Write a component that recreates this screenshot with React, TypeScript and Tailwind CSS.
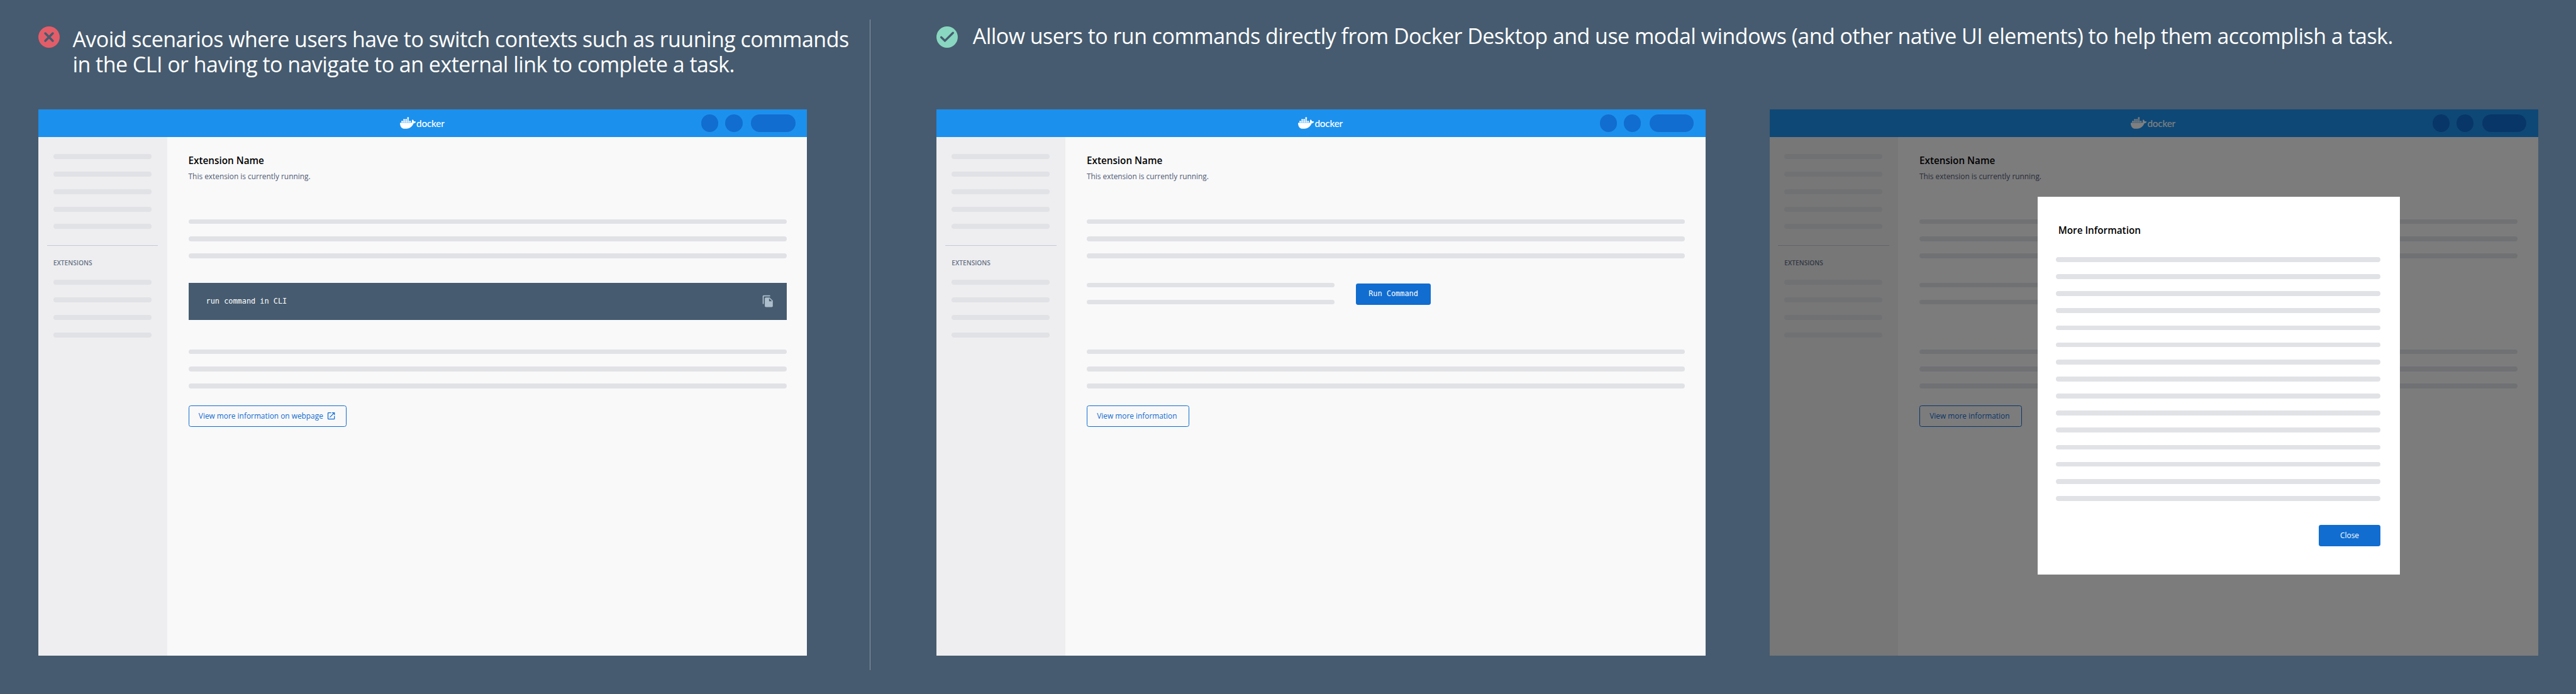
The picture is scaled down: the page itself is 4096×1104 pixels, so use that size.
import { SiDocker } from "react-icons/si";
import { MdFileCopy, MdOpenInNew } from "react-icons/md";

function Bars({ count, className = "" }: { count: number; className?: string }) {
  return (
    <div className={`flex flex-col gap-[23px] ${className}`}>
      {Array.from({ length: count }, (_, i) => (
        <div key={i} className="h-[9px] rounded-full bg-[#e1e2e6]" />
      ))}
    </div>
  );
}

function SideBar() {
  const bar = "h-[9px] rounded-full bg-[#e1e2e6]";
  return (
    <aside className="h-full w-[241px] shrink-0 bg-[#eeeef0] pt-8">
      <div className="ml-7 flex w-[184px] flex-col gap-6">
        <div className={bar} />
        <div className={bar} />
        <div className={bar} />
        <div className={bar} />
        <div className={`${bar} -mt-px`} />
      </div>
      <div className="mt-[31px] ml-4 h-px w-52 bg-[#c4c8d1]" />
      <div className="mt-6 ml-7 h-[18px] text-[12px] leading-[18px] font-semibold text-[#677285]">
        EXTENSIONS
      </div>
      <div className="mt-[22px] ml-7 flex w-[184px] flex-col gap-6">
        <div className={bar} />
        <div className={bar} />
        <div className={bar} />
        <div className={bar} />
      </div>
    </aside>
  );
}

function TopBar() {
  return (
    <header className="flex h-[52px] shrink-0 items-center bg-[#1c90ed]">
      <div className="ml-[677px] flex w-[86px] items-center text-white">
        <SiDocker className="size-[30px] shrink-0" />
        <span className="mt-[2px] ml-px font-['Lato',sans-serif] text-[18px] leading-[20px] font-medium tracking-[-0.2px]">
          docker
        </span>
      </div>
      <div className="mr-[22px] ml-auto flex items-center">
        <div className="size-8 rounded-full bg-[#116dd0]" />
        <div className="ml-[13px] size-8 rounded-full bg-[#116dd0]" />
        <div className="ml-4 h-8 w-[83px] rounded-full bg-[#116dd0]" />
      </div>
    </header>
  );
}

function AppWindow({ cli = false }: { cli?: boolean }) {
  return (
    <div className="flex h-[1024px] w-[1440px] flex-col bg-[#f9f9fa]">
      <TopBar />
      <div className="flex min-h-0 flex-1">
        <SideBar />
        <main className="w-[1161px] pt-8 pl-10">
          <h2 className="h-6 text-[18px] leading-6 font-semibold text-black">Extension Name</h2>
          <p className="mt-[8px] h-5 text-[14px] leading-5 text-[#505b73]">
            This extension is currently running.
          </p>
          <Bars count={3} className="mt-[70px]" />
          <div className="mt-[46px] h-[70px]">
            {cli ? (
              <div className="flex h-full items-center bg-[#465b6f] pr-[23px] pl-[33px] font-['DejaVu_Sans_Mono',monospace] text-[14px] text-white">
                <span>run command in CLI</span>
                <MdFileCopy className="ml-auto size-6 text-[#adbfcc]" />
              </div>
            ) : (
              <div className="flex items-start">
                <Bars count={2} className="w-[464px]" />
                <button className="mt-px ml-10 h-10 w-[141px] rounded-[4px] bg-[#116dd0] font-['DejaVu_Sans_Mono',monospace] text-[14px] text-white">
                  Run Command
                </button>
              </div>
            )}
          </div>
          <Bars count={3} className="mt-[55px]" />
          <button
            className={`mt-8 flex h-10 items-center rounded-[4px] border border-[#116dd0] pl-[18px] text-[14px] text-[#116dd0] ${cli ? "w-[296px]" : "w-[192px]"}`}
          >
            {cli ? "View more information on webpage" : "View more information"}
            {cli && <MdOpenInNew className="ml-[6px] size-[18px]" />}
          </button>
        </main>
      </div>
    </div>
  );
}

function Modal() {
  return (
    <div className="absolute top-[164px] left-[502px] h-[708px] w-[679px] bg-white pt-[51px] pr-9 pl-[35px]">
      <h3 className="ml-1 h-6 text-[18px] leading-6 font-semibold text-black">More Information</h3>
      <Bars count={15} className="mt-[38px]" />
      <button className="mt-[45px] ml-auto block h-10 w-[116px] rounded-[4px] bg-[#116dd0] text-[14px] text-white">
        Close
      </button>
    </div>
  );
}

export default function App() {
  return (
    <div className="flex h-[1301px] w-[4826px] overflow-hidden bg-[#465b6f] font-['Open_Sans',sans-serif] [zoom:0.848736]">
      <section className="ml-[72px] w-[1557px] shrink-0">
        <div className="flex h-[205px] items-start">
          <svg viewBox="0 0 40 40" className="mt-[49px] size-10 shrink-0">
            <circle cx="20" cy="20" r="20" fill="#e35d68" />
            <path
              d="M13 13 27 27M27 13 13 27"
              stroke="#465b6f"
              strokeWidth="4.2"
              strokeLinecap="round"
            />
          </svg>
          <p className="mt-[49px] ml-6 text-[40px] leading-[48px] tracking-[-0.6px] whitespace-nowrap text-white">
            Avoid scenarios where users have to switch contexts such as ruuning commands
            <br />
            in the CLI or having to navigate to an external link to complete a task.
          </p>
        </div>
        <AppWindow cli />
      </section>

      <div className="mt-9 h-[1220px] w-[2px] shrink-0 bg-[#8b98a5]" />

      <section className="ml-[124px] w-[3000px] shrink-0">
        <div className="flex h-[205px] items-start">
          <svg viewBox="0 0 40 40" className="mt-[49px] size-10 shrink-0">
            <circle cx="20" cy="20" r="20" fill="#89d7c0" />
            <path
              d="M9 20.3 16 27 31 12"
              fill="none"
              stroke="#465b6f"
              strokeWidth="4"
              strokeLinecap="round"
              strokeLinejoin="round"
            />
          </svg>
          <p className="mt-[44px] ml-[27.5px] text-[40px] leading-[48px] tracking-[-0.6px] whitespace-nowrap text-white">
            Allow users to run commands directly from Docker Desktop and use modal windows (and other
            native UI elements) to help them accomplish a task.
          </p>
        </div>
        <div className="flex gap-[120px]">
          <AppWindow />
          <div className="relative">
            <AppWindow />
            <div className="absolute inset-0 bg-black/50" />
            <Modal />
          </div>
        </div>
      </section>
    </div>
  );
}
